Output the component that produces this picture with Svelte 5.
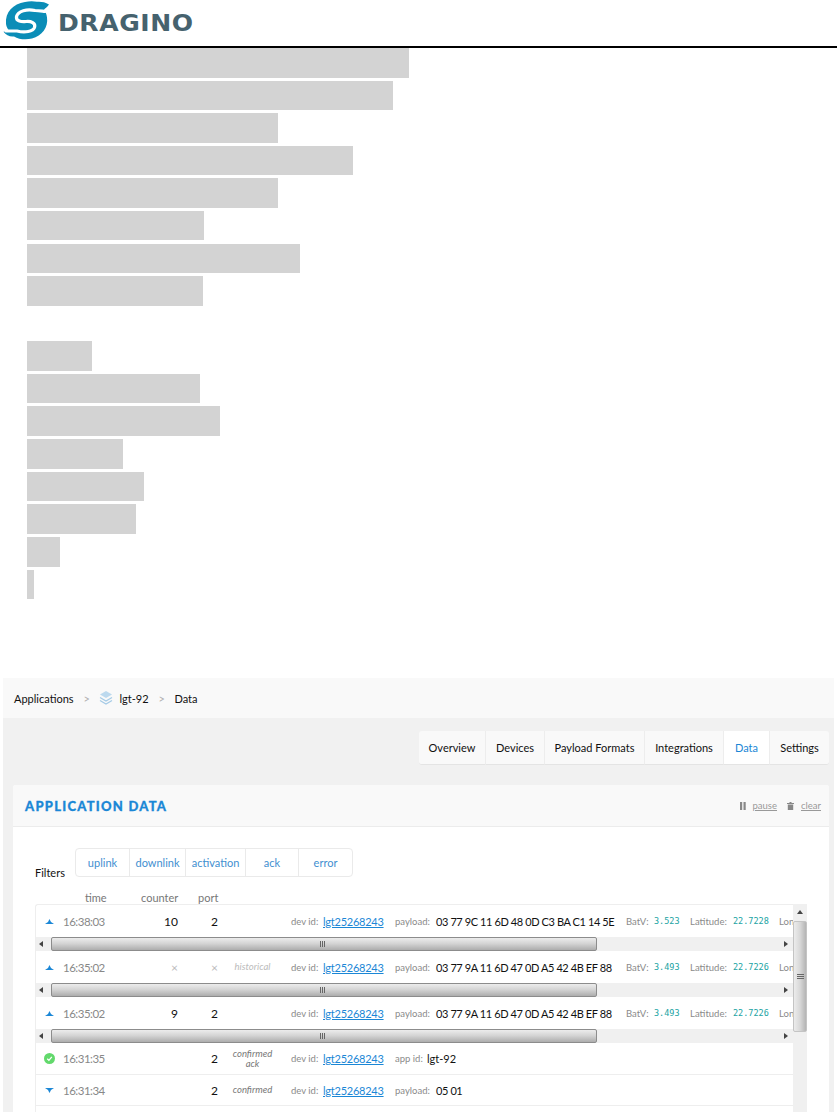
<script>
  const barsA = [
    [0, 30, 382], [3, 29, 366], [3, 30, 251], [3, 29, 326],
    [3, 30, 251], [3, 29, 177], [4, 29, 273], [3, 30, 176]
  ];
  const barsB = [
    [35, 30, 65], [3, 29, 173], [3, 30, 193], [3, 30, 96],
    [3, 29, 117], [3, 30, 109], [3, 30, 33], [3, 29, 7]
  ];
  const tabs = ['Overview', 'Devices', 'Payload Formats', 'Integrations', 'Data', 'Settings'];
  const filters = ['uplink', 'downlink', 'activation', 'ack', 'error'];
  const rows = [
    { kind: 'up', h: 32, time: '16:38:03', counter: '10', port: '2', payload: '03 77 9C 11 6D 48 0D C3 BA C1 14 5E', bat: '3.523', lat: '22.7228', scroll: true },
    { kind: 'up', h: 32, time: '16:35:02', counter: '×', port: '×', tag: ['historical'], light: true, payload: '03 77 9A 11 6D 47 0D A5 42 4B EF 88', bat: '3.493', lat: '22.7226', scroll: true },
    { kind: 'up', h: 32, time: '16:35:02', counter: '9', port: '2', payload: '03 77 9A 11 6D 47 0D A5 42 4B EF 88', bat: '3.493', lat: '22.7226', scroll: true },
    { kind: 'ack', h: 32, time: '16:31:35', counter: '', port: '2', tag: ['confirmed', 'ack'], appId: 'lgt-92' },
    { kind: 'down', h: 31, time: '16:31:34', counter: '', port: '2', tag: ['confirmed'], payload: '05 01' },
    { kind: 'none', h: 31, time: '', counter: '', port: '' }
  ];
</script>

<div class="page">
  <header class="brand">
    <svg class="mark" viewBox="0 0 50 44" width="50" height="44" aria-hidden="true">
      <path fill="#0b8db7" d="M49 4.500C45 2 41 1.500 37 1.800C33 .8 29 1 25 2C13 4 5 12 6 24C6.500 27 7.500 28.500 8.500 30C6.500 31 5 31.500 3.500 31.800C6 35.500 10 37 14 36.500C19 39.500 26 40 32 38.500C42 36 48.500 27 47 17.500C46.500 14 45.500 11.500 44 9.500C46 8 47.500 6.500 49 4.500Z"/>
      <path fill="none" stroke="#fff" stroke-width="3.200" stroke-linecap="round" d="M45 11.500C41 11 38 10.500 35 10.500C27 8.500 18 11 16.500 16.500C15.500 21.500 22 22 26 21.500C31 21 36 23 34.500 27.500C33 31.500 25 33 17 31C13 31 9 31 6 31"/>
    </svg>
    <span class="word">DRAGINO</span>
  </header>

  <div class="bars">
    {#each barsA as [gap, h, w]}
      <div class="bar" style="margin-top:{gap}px;height:{h}px;width:{w}px"></div>
    {/each}
    {#each barsB as [gap, h, w]}
      <div class="bar" style="margin-top:{gap}px;height:{h}px;width:{w}px"></div>
    {/each}
  </div>

  <section class="shot">
    <nav class="crumbs">
      <span>Applications</span>
      <span class="sep">&gt;</span>
      <svg class="stack" viewBox="0 0 14 16" width="14" height="16" aria-hidden="true">
        <path fill="#bcd9ee" d="M7 1 13 4.500 7 8 1 4.500Z"/>
        <path fill="none" stroke="#a5cbe6" stroke-width="1.300" d="M1 7.500 7 11 13 7.500M1 10.500 7 14 13 10.500"/>
      </svg>
      <span class="app">lgt-92</span>
      <span class="sep">&gt;</span>
      <span>Data</span>
    </nav>

    <div class="content">
      <div class="tabs">
        {#each tabs as t}
          <span class="tab" class:active={t === 'Data'}>{t}</span>
        {/each}
      </div>

      <div class="card">
        <div class="card-head">
          <h2>APPLICATION DATA</h2>
          <div class="actions">
            <svg viewBox="0 0 6 8" width="6" height="8" aria-hidden="true"><path fill="#888" d="M0 0h2.200v8H0zM3.500 0h2.200v8H3.500z"/></svg>
            <a href="#pause">pause</a>
            <svg class="trash" viewBox="0 0 7 8" width="7" height="8" aria-hidden="true"><path fill="#888" d="M0 1h7v1H0zM2.500 0h2v1h-2zM.8 2.500h5.400V8H.8z"/></svg>
            <a href="#clear">clear</a>
          </div>
        </div>

        <div class="card-body">
          <div class="filter-line">
            <span class="filter-label">Filters</span>
            <div class="filters">
              {#each filters as f}<span class="filter">{f}</span>{/each}
            </div>
          </div>

          <div class="cols">
            <span class="c-time">time</span>
            <span class="c-counter">counter</span>
            <span class="c-port">port</span>
          </div>

          <div class="table">
            <div class="rows">
              {#each rows as r}
                <div class="row" class:plain={!r.scroll} style="height:{r.h}px">
                  <span class="ico">
                    {#if r.kind === 'up'}
                      <svg viewBox="0 0 9 5" width="9" height="5" aria-hidden="true"><path fill="#1b87d6" d="M4.500 0 6 3 9 5H0L3 3Z"/></svg>
                    {:else if r.kind === 'down'}
                      <svg viewBox="0 0 9 5" width="9" height="5" aria-hidden="true"><path fill="#1b87d6" d="M0 0h9L6 2 4.500 5 3 2Z"/></svg>
                    {:else if r.kind === 'ack'}
                      <svg viewBox="0 0 11 11" width="11" height="11" aria-hidden="true"><circle cx="5.500" cy="5.500" r="5.500" fill="#62d96c"/><path fill="none" stroke="#fff" stroke-width="1.300" d="M3.200 5.800 4.900 7.300 7.800 3.900"/></svg>
                    {/if}
                  </span>
                  <span class="time">{r.time}</span>
                  <span class="counter" class:faint={r.light}>{r.counter}</span>
                  <span class="port" class:faint={r.light}>{r.port}</span>
                  <span class="tag" class:faint={r.light}>
                    {#if r.tag}{#each r.tag as line}<span>{line}</span>{/each}{/if}
                  </span>
                  {#if r.time}
                    <span class="lbl dev">dev id:</span>
                    <a class="dev-link" href="#dev">lgt25268243</a>
                  {/if}
                  {#if r.appId}
                    <span class="lbl pay">app id:</span>
                    <span class="app-val">{r.appId}</span>
                  {/if}
                  {#if r.payload}
                    <span class="lbl pay">payload:</span>
                    <span class="hex">{r.payload}</span>
                  {/if}
                  {#if r.bat}
                    <span class="lbl batv">BatV:</span>
                    <span class="num batn">{r.bat}</span>
                    <span class="lbl latl">Latitude:</span>
                    <span class="num latn">{r.lat}</span>
                    <span class="lbl">Lon</span>
                  {/if}
                </div>
                {#if r.scroll}
                  <div class="hbar">
                    <span class="harrow left"></span>
                    <span class="hthumb"><i></i></span>
                    <span class="harrow right"></span>
                  </div>
                {/if}
              {/each}
            </div>
            <div class="vbar">
              <span class="varrow"></span>
              <span class="vthumb"><i></i></span>
            </div>
          </div>
        </div>
      </div>
    </div>
  </section>
</div>

<style>
  :global(body) { margin: 0; background: #fff; }
  .page {
    width: 837px;
    height: 1112px;
    overflow: hidden;
    font-family: Lato, "Liberation Sans", sans-serif;
    color: #111;
    background: #fff;
  }
  .brand {
    box-sizing: border-box;
    height: 48px;
    border-bottom: 2px solid #000;
    display: flex;
    align-items: flex-start;
  }
  .mark { flex: none; }
  .word {
    margin: 7px 0 0 8px;
    font-family: "DejaVu Sans", sans-serif;
    font-weight: 700;
    font-size: 23px;
    line-height: 32px;
    letter-spacing: .5px;
    color: #46626e;
    transform: scaleX(1.09);
    transform-origin: left center;
  }
  .bars {
    display: flex;
    flex-direction: column;
    padding-left: 27px;
    height: 630px;
  }
  .bar { background: #d3d3d3; flex: none; }

  .shot {
    margin-left: 3px;
    width: 831px;
    background: #f1f1f1;
    height: 434px;
  }
  .crumbs {
    height: 40px;
    background: #f9f9f9;
    display: flex;
    align-items: center;
    padding-left: 11px;
    font-size: 11px;
    color: #111;
  }
  .sep { color: #b0b0b0; margin: 0 9.500px 0 10px; font-size: 11px; }
  .stack { margin-right: 6px; }

  .content { padding: 13px 5px 0 10px; }
  .tabs {
    display: flex;
    justify-content: flex-end;
    height: 34px;
  }
  .tab {
    box-sizing: border-box;
    display: flex;
    align-items: center;
    justify-content: center;
    width: 59px;
    background: #f9f9f9;
    border-right: 1px solid #ededed;
    border-bottom: 1px solid #e4e4e4;
    font-size: 11px;
    color: #111;
  }
  .tab:nth-child(1) { width: 67px; border-radius: 3px 0 0 3px; }
  .tab:nth-child(3) { width: 100px; }
  .tab:nth-child(4) { width: 79px; }
  .tab:nth-child(5) { width: 46px; }
  .tab:last-child { border-right: 0; border-radius: 0 3px 3px 0; }
  .tab.active { background: #fff; color: #1b87d6; }

  .card {
    margin-top: 20px;
    background: #fff;
    border-radius: 3px 3px 0 0;
    height: 340px;
  }
  .card-head {
    box-sizing: border-box;
    height: 42px;
    background: #f9f9f9;
    border-bottom: 1px solid #ececec;
    border-radius: 3px 3px 0 0;
    display: flex;
    align-items: center;
    justify-content: space-between;
    padding: 0 8px 0 12px;
  }
  h2 {
    margin: 0;
    font-size: 13px;
    font-weight: 900;
    letter-spacing: 1.25px;
    color: #1b87d6;
    -webkit-text-stroke: .3px #1b87d6;
  }
  .actions {
    display: flex;
    align-items: center;
    font-size: 9.500px;
  }
  .actions a { color: #999; margin-left: 7px; }
  .actions .trash { margin-left: 10px; }

  .card-body { padding: 21px 0 0 22px; }
  .filter-line { display: flex; align-items: flex-start; height: 30px; }
  .filter-label {
    width: 40px;
    margin-top: 18px;
    font-size: 11px;
    line-height: 14px;
    color: #111;
  }
  .filters {
    display: flex;
    height: 29px;
    box-sizing: border-box;
    border: 1px solid #eaeaea;
    border-radius: 4px;
  }
  .filter {
    display: flex;
    align-items: center;
    justify-content: center;
    box-sizing: border-box;
    font-size: 11px;
    color: #3f8fd0;
    border-right: 1px solid #eaeaea;
    width: 56px;
  }
  .filter:nth-child(1) { width: 54px; }
  .filter:nth-child(3) { width: 60px; }
  .filter:nth-child(4) { width: 53px; }
  .filter:last-child { width: 53px; border-right: 0; }

  .cols {
    position: relative;
    height: 26px;
    font-size: 11px;
    color: #777;
  }
  .cols span { position: absolute; top: 13px; line-height: 14px; }
  .c-time { left: 50px; }
  .c-counter { left: 106px; }
  .c-port { left: 163px; }

  .table { display: flex; width: 772px; align-items: flex-start; }
  .rows {
    width: 758px;
    flex: none;
    border-top: 1px solid #eee;
    border-left: 1px solid #eee;
    border-radius: 3px 0 0 0;
    box-sizing: border-box;
  }
  .row {
    box-sizing: border-box;
    display: flex;
    align-items: center;
    overflow: hidden;
    white-space: nowrap;
    font-size: 11px;
  }
  .row.plain { border-bottom: 1px solid #eee; }
  .ico { width: 27px; flex: none; display: flex; justify-content: center; box-sizing: border-box; }
  .time { width: 68px; flex: none; color: #888; font-size: 11.500px; letter-spacing: -.5px; }
  .counter { width: 47px; flex: none; text-align: right; color: #111; font-size: 12px; }
  .port { width: 40px; flex: none; text-align: right; color: #111; font-size: 12px; }
  .faint { color: #bbb; font-weight: 400; }
  .tag {
    width: 69px;
    margin-right: 4px;
    flex: none;
    display: flex;
    flex-direction: column;
    align-items: center;
    font-style: italic;
    font-size: 9.500px;
    line-height: 10px;
    color: #777;
  }
  .tag.faint { color: #bbb; }
  .lbl { font-size: 9.500px; color: #8a8a8a; flex: none; }
  .dev { width: 32px; }
  .dev-link { width: 72px; flex: none; color: #1b87d6; text-decoration: underline; font-size: 11px; letter-spacing: -.25px; }
  .pay { width: 41px; }
  .hex { width: 190px; flex: none; font-size: 11px; letter-spacing: -.4px; color: #111; }
  .app-val { color: #111; font-size: 11px; margin-left: -9px; }
  .batv { width: 28px; }
  .latl { width: 43px; }
  .num {
    flex: none;
    font-family: "DejaVu Sans Mono", monospace;
    font-size: 8.500px;
    color: #1aa3a3;
  }
  .batn { width: 36px; }
  .latn { width: 46px; }

  .hbar {
    box-sizing: border-box;
    height: 14px;
    background: #f0f0f0;
    display: flex;
    align-items: stretch;
    position: relative;
  }
  .harrow { width: 15px; flex: none; position: relative; }
  .harrow::after {
    content: "";
    position: absolute;
    top: 4px;
    border: 3px solid transparent;
  }
  .harrow.left::after { left: 3px; border-right: 4px solid #444; border-left: 0; }
  .harrow.right { position: absolute; right: 0; top: 0; height: 14px; }
  .harrow.right::after { left: 6px; border-left: 4px solid #444; border-right: 0; }
  .hthumb {
    box-sizing: border-box;
    width: 546px;
    flex: none;
    border: 1px solid #8c8c8c;
    border-radius: 2px;
    background: linear-gradient(#ececec, #d5d5d5 45%, #adadad);
    position: relative;
  }
  .hthumb i {
    position: absolute;
    left: 268px;
    top: 3px;
    width: 6px;
    height: 6px;
    background: repeating-linear-gradient(90deg, #666 0 1px, transparent 1px 2px);
  }
  .vbar {
    width: 14px;
    flex: none;
    height: 208px;
    background: #f0f0f0;
    display: flex;
    flex-direction: column;
  }
  .varrow { height: 17px; position: relative; flex: none; }
  .varrow::after {
    content: "";
    position: absolute;
    left: 4px;
    top: 6px;
    border: 3px solid transparent;
    border-bottom: 4px solid #444;
    border-top: 0;
  }
  .vthumb {
    box-sizing: border-box;
    height: 111px;
    flex: none;
    border: 1px solid #c4c4c4;
    border-radius: 2px;
    background: linear-gradient(90deg, #ececec, #d8d8d8 50%, #b4b4b4);
    position: relative;
  }
  .vthumb i {
    position: absolute;
    left: 3px;
    top: 52px;
    width: 7px;
    height: 6px;
    background: repeating-linear-gradient(#666 0 1px, transparent 1px 2px);
  }
</style>
